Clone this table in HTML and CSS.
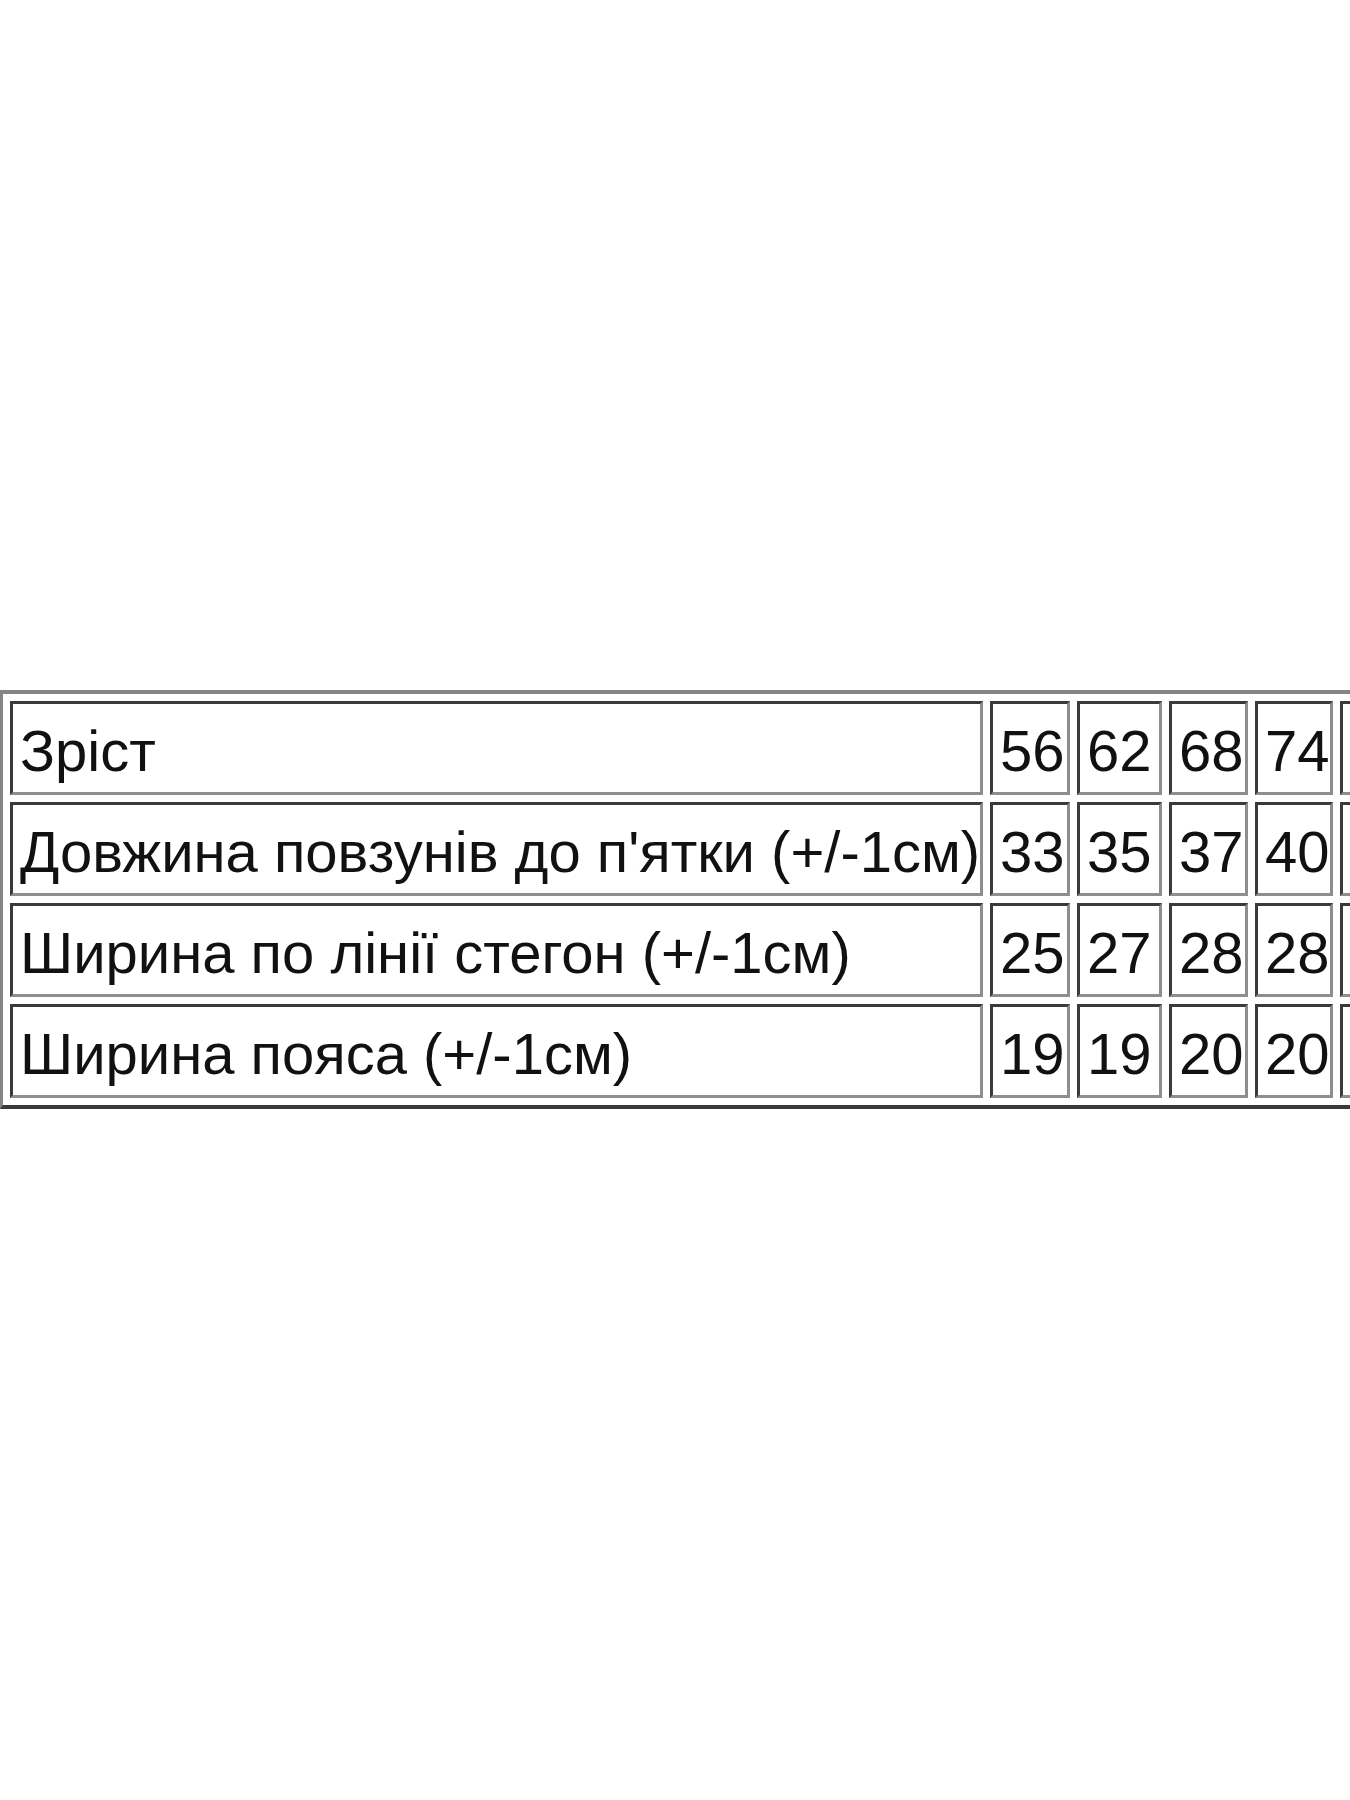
FILE: index.html
```html
<!DOCTYPE html>
<html lang="uk">
<head>
<meta charset="utf-8">
<title>Розмірна сітка</title>
<link rel="stylesheet" href="styles.css">
</head>
<body>
<div class="page">
  <table class="sizes">
    <colgroup>
      <col class="c-label">
      <col class="c-56">
      <col class="c-62">
      <col class="c-68">
      <col class="c-74">
      <col class="c-next">
    </colgroup>
    <tbody>
      <tr>
        <td>Зріст</td><td>56</td><td>62</td><td>68</td><td>74</td><td></td>
      </tr>
      <tr>
        <td>Довжина повзунів до п'ятки (+/-1см)</td><td>33</td><td>35</td><td>37</td><td>40</td><td></td>
      </tr>
      <tr>
        <td>Ширина по лінії стегон (+/-1см)</td><td>25</td><td>27</td><td>28</td><td>28</td><td></td>
      </tr>
      <tr>
        <td>Ширина пояса (+/-1см)</td><td>19</td><td>19</td><td>20</td><td>20</td><td></td>
      </tr>
    </tbody>
  </table>
</div>
</body>
</html>
```

FILE: styles.css
```css
html, body {
  margin: 0;
  padding: 0;
  background: #ffffff;
}

.page {
  width: 1350px;
  height: 1800px;
  overflow: hidden;
  padding-top: 690px;
  box-sizing: border-box;
}

.sizes {
  table-layout: fixed;
  width: 1430px;
  border-collapse: separate;
  border-spacing: 7px 7px;
  border-style: solid;
  border-width: 4px 4px 4px 3px;
  border-color: #858585 #3a3a3a #3a3a3a #858585;
  font-family: "Liberation Sans", Arial, sans-serif;
  font-size: 58px;
  color: #111111;
}

.c-label { width: 973px; }
.c-56 { width: 80px; }
.c-62 { width: 85px; }
.c-68 { width: 79px; }
.c-74 { width: 78px; }
.c-next { width: 80px; }

.sizes td {
  box-sizing: border-box;
  height: 94px;
  padding: 6px 5px 0 7px;
  border-style: solid;
  border-width: 3px;
  border-color: #3a3a3a #8e8e8e #8e8e8e #3a3a3a;
  white-space: nowrap;
  vertical-align: middle;
  text-align: left;
  line-height: 1;
  overflow: hidden;
}
```
